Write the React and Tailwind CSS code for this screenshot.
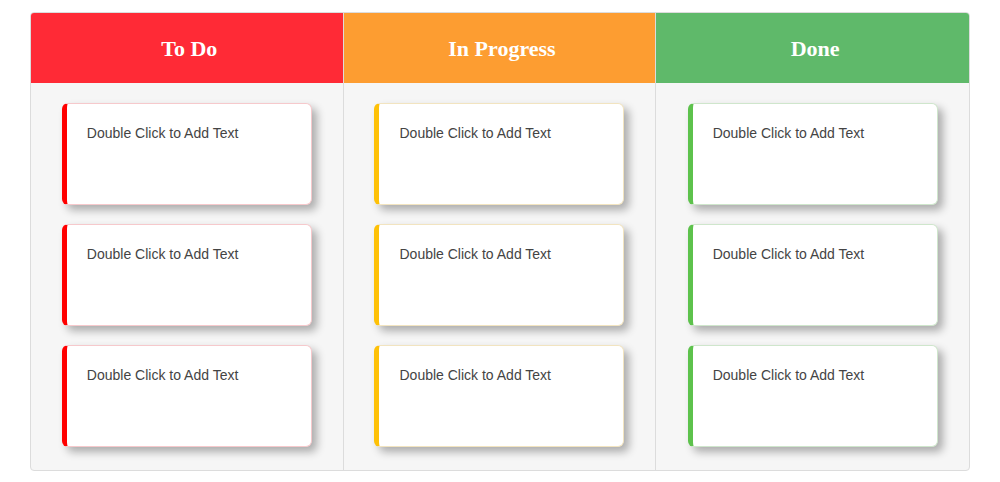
import React from 'react';

const columns = [
  {
    title: 'To Do',
    header: 'bg-[#ff2a36]',
    card: 'border-[#f6c9cc] border-l-[#ff0000]',
  },
  {
    title: 'In Progress',
    header: 'bg-[#fd9d31]',
    card: 'border-[#f2e4c0] border-l-[#fec107]',
  },
  {
    title: 'Done',
    header: 'bg-[#5fb96a]',
    card: 'border-[#cfe6cc] border-l-[#5dc24c]',
  },
];

const Card = ({ tone }) => (
  <div
    className={`h-[102px] w-[250px] rounded-md border border-l-[5px] bg-white pl-[20px] pt-[20px] text-[14px] leading-[18px] text-[#444] shadow-[5px_5px_8px_rgba(0,0,0,0.3)] ${tone}`}
  >
    Double Click to Add Text
  </div>
);

export default function App() {
  return (
    <div className="bg-white px-[30px] pt-[12px] pb-[12px] font-['Liberation_Sans',Arial,sans-serif]">
      <div className="grid grid-cols-3 overflow-hidden rounded border border-[#dcdcdc] bg-[#f6f6f6]">
        {columns.map((col, i) => (
          <div
            key={col.title}
            className={`flex flex-col ${i < 2 ? 'border-r border-[#dcdcdc]' : ''}`}
          >
            <div
              className={`flex h-[70px] items-center justify-center pl-[5px] font-['Liberation_Serif','Times_New_Roman',serif] text-[22px] font-bold text-white ${col.header}`}
            >
              {col.title}
            </div>
            <div className="flex flex-col items-center gap-[19px] pt-[20px] pb-[23px]">
              {[0, 1, 2].map((n) => (
                <Card key={n} tone={col.card} />
              ))}
            </div>
          </div>
        ))}
      </div>
    </div>
  );
}
